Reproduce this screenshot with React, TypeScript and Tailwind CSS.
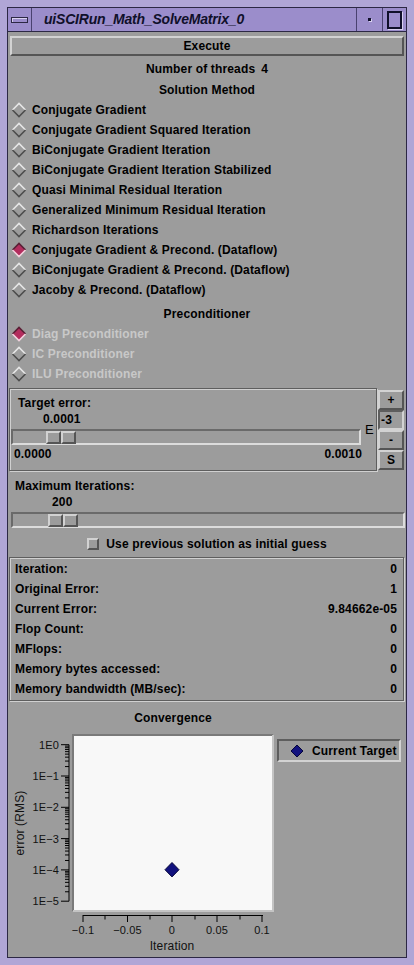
const methods = [
  "Conjugate Gradient",
  "Conjugate Gradient Squared Iteration",
  "BiConjugate Gradient Iteration",
  "BiConjugate Gradient Iteration Stabilized",
  "Quasi Minimal Residual Iteration",
  "Generalized Minimum Residual Iteration",
  "Richardson Iterations",
  "Conjugate Gradient & Precond. (Dataflow)",
  "BiConjugate Gradient & Precond. (Dataflow)",
  "Jacoby & Precond. (Dataflow)",
];

const precs = ["Diag Preconditioner", "IC Preconditioner", "ILU Preconditioner"];

const stats: [string, string][] = [
  ["Iteration:", "0"],
  ["Original Error:", "1"],
  ["Current Error:", "9.84662e-05"],
  ["Flop Count:", "0"],
  ["MFlops:", "0"],
  ["Memory bytes accessed:", "0"],
  ["Memory bandwidth (MB/sec):", "0"],
];

const raised =
  "border-2 border-t-[#d2d2d2] border-l-[#d2d2d2] border-r-[#555555] border-b-[#555555]";
const sunken =
  "border-2 border-t-[#5e5e5e] border-l-[#5e5e5e] border-r-[#d2d2d2] border-b-[#d2d2d2]";
const groove =
  "border border-[#5e5e5e] shadow-[inset_1px_1px_0_#d0d0d0,1px_1px_0_#d0d0d0]";

function Diamond({ on }: { on?: boolean }) {
  return (
    <svg width="16" height="16" viewBox="0 0 16 16" className="shrink-0">
      <polygon points="8,1.5 14.5,8 8,14.5 1.5,8" fill={on ? "#b32d5e" : "#9c9c9c"} />
      <polyline
        points="1.5,8 8,1.5 14.5,8"
        fill="none"
        stroke={on ? "#5a2036" : "#e6e6e6"}
        strokeWidth="1.6"
      />
      <polyline
        points="1.5,8 8,14.5 14.5,8"
        fill="none"
        stroke={on ? "#f2d2de" : "#4e4e4e"}
        strokeWidth="1.6"
      />
    </svg>
  );
}

function Radio({ label, on, dim }: { label: string; on?: boolean; dim?: boolean }) {
  return (
    <div className="flex items-center h-[20px] pl-[3px] gap-[5px]">
      <Diamond on={on} />
      <span className={dim ? "text-[#c8c8c8]" : "text-black"}>{label}</span>
    </div>
  );
}

function Slider({ width, thumb }: { width: number; thumb: number }) {
  return (
    <div
      className="flex items-center h-[16px] border-2 border-t-[#6a6a6a] border-l-[#6a6a6a] border-r-[#dcdcdc] border-b-[#dcdcdc] bg-[#9c9c9c]"
      style={{ width }}
    >
      <div className="flex h-[13px]" style={{ marginLeft: thumb }}>
        <div className={`w-[15px] h-full ${raised} border`} />
        <div className={`w-[15px] h-full ${raised} border`} />
      </div>
    </div>
  );
}

const svgFont = "Liberation Sans, Arial, sans-serif";

function Chart() {
  const majors = [745.7, 777, 808.3, 839.6, 870.9, 902.2];
  const labels = ["1E0", "1E−1", "1E−2", "1E−3", "1E−4", "1E−5"];
  const minors: number[] = [];
  for (let d = 1; d < majors.length; d++) {
    const low = majors[d];
    for (let m = 2; m <= 9; m++) minors.push(low - Math.log10(m) * 31.3);
  }
  const xs = [82, 126.5, 171, 216, 261];
  const xl = ["−0.1", "−0.05", "0", "0.05", "0.1"];
  return (
    <svg width="268" height="223" viewBox="7 734 268 223" className="block font-normal">
      <rect x="72" y="736" width="200" height="176" fill="#f8f8f8" />
      <polyline points="72,912 72,736 272,736" fill="none" stroke="#7a7a7a" strokeWidth="2" />
      <polyline points="272,736 272,912 72,912" fill="none" stroke="#c4c4c4" strokeWidth="2" />
      <line x1="68" y1={majors[0]} x2="68" y2={majors[5]} stroke="#000" strokeWidth="1" />
      {majors.map((y, i) => (
        <g key={i}>
          <line x1="60" y1={y} x2="68" y2={y} stroke="#000" />
          <text x="58" y={y + 4} textAnchor="end" fontSize="11" fontWeight="normal" fontFamily={svgFont} fill="#111">
            {labels[i]}
          </text>
        </g>
      ))}
      {minors.map((y, i) => (
        <line key={i} x1="64" y1={y} x2="68" y2={y} stroke="#000" />
      ))}
      <text
        x="0"
        y="0"
        transform="translate(23 824) rotate(-90)"
        textAnchor="middle"
        fontSize="12"
        fontWeight="normal"
        fontFamily={svgFont}
        fill="#111"
      >
        error (RMS)
      </text>
      <line x1="82" y1="916.5" x2="262" y2="916.5" stroke="#000" />
      {xs.map((x, i) => (
        <g key={i}>
          <line x1={x} y1="916" x2={x} y2="923" stroke="#000" />
          <text x={x} y="935" textAnchor="middle" fontSize="11" fontWeight="normal" fontFamily={svgFont} fill="#111">
            {xl[i]}
          </text>
        </g>
      ))}
      {[104, 149, 194, 239].map((x) => (
        <line key={x} x1={x} y1="916" x2={x} y2="920.5" stroke="#000" />
      ))}
      <text x="171" y="951" textAnchor="middle" fontSize="12" fontWeight="normal" fontFamily={svgFont} fill="#111">
        Iteration
      </text>
      <polygon points="171,863.5 178,870.7 171,877.9 164,870.7" fill="#12127e" stroke="#05053a" strokeWidth="1" />
    </svg>
  );
}

export default function App() {
  return (
    <div className="w-[414px] h-[965px] bg-[#b0a6d6] p-[7px] font-['Liberation_Sans',Arial,sans-serif] text-[12px] tracking-[0.15px] font-bold text-black">
      <div className="flex flex-col h-full border border-[#2c2844] bg-[#9c9c9c]">
        {/* title bar */}
        <div className="flex h-[24px] bg-[#9b8dcb] border-b border-[#2c2844] shrink-0">
          <div className="w-[24px] flex items-center justify-center border-r border-[#4a4270]">
            <div className="w-[17px] h-[6px] border border-[#2c2844] bg-[#9b8dcb] shadow-[inset_1px_1px_0_#d8d0f0]" />
          </div>
          <div className="flex-1 pl-[12px] flex items-center italic text-[14px] text-[#10102a] tracking-[-0.2px]">
            uiSCIRun_Math_SolveMatrix_0
          </div>
          <div className="w-[26px] flex items-center justify-center border-l border-[#4a4270]">
            <div className="w-[3px] h-[3px] bg-[#10102a] shadow-[1px_1px_0_#d8d0f0]" />
          </div>
          <div className="w-[24px] flex items-center justify-center border-l border-[#4a4270]">
            <div className="w-[15px] h-[18px] border-2 border-[#10102a] shadow-[1px_1px_0_#d8d0f0]" />
          </div>
        </div>

        {/* content */}
        <div className="flex flex-col flex-1 pt-[4px]">
          <div className={`mx-[2px] h-[20px] flex items-center justify-center ${raised}`}>Execute</div>
          <div className="mt-[3px] h-[20px] flex items-center justify-center gap-[6px]">
            <span>Number of threads</span>
            <span>4</span>
          </div>
          <div className="h-[21px] flex items-center justify-center">Solution Method</div>
          {methods.map((m, i) => (
            <Radio key={m} label={m} on={i === 7} />
          ))}
          <div className="h-[24px] pt-[4px] leading-[20px] text-center">Preconditioner</div>
          {precs.map((p, i) => (
            <Radio key={p} label={p} on={i === 0} dim />
          ))}

          {/* target error */}
          <div className="flex mt-[4px] h-[84px]">
            <div className={`ml-[1px] w-[368px] h-[83px] flex ${groove}`}>
              <div className="w-[352px] flex flex-col pl-[1px]">
                <div className="mt-[6px] h-[16px] flex items-center pl-[7px]">Target error:</div>
                <div className="h-[16px] flex items-center pl-[32px]">0.0001</div>
                <div className="mt-[2px]">
                  <Slider width={350} thumb={33} />
                </div>
                <div className="h-[16px] mt-[1px] flex items-center justify-between pl-[3px]">
                  <span>0.0000</span>
                  <span>0.0010</span>
                </div>
              </div>
              <div className="flex-1 flex items-center pl-[3px] text-[13px] font-normal">E</div>
            </div>
            <div className="ml-[1px] mt-[2px] w-[26px] flex flex-col">
              <div className={`h-[20px] flex items-center justify-center ${raised}`}>+</div>
              <div className={`h-[20px] flex items-center pl-[1px] ${sunken}`}>-3</div>
              <div className={`h-[20px] flex items-center justify-center ${raised}`}>-</div>
              <div className={`h-[20px] flex items-center justify-center ${raised}`}>S</div>
            </div>
          </div>

          {/* max iterations */}
          <div className="mt-[6px] h-[16px] flex items-center pl-[7px]">Maximum Iterations:</div>
          <div className="h-[16px] flex items-center pl-[44px]">200</div>
          <div className="mt-[2px] ml-[3px]">
            <Slider width={394} thumb={35} />
          </div>
          <div className="mt-[6px] h-[20px] flex items-center justify-center gap-[7px]">
            <div className={`w-[12px] h-[12px] ${raised} border`} />
            <span>Use previous solution as initial guess</span>
          </div>

          {/* stats */}
          <div className={`mt-[3px] ml-[1px] mr-[2px] h-[144px] pt-[1px] ${groove}`}>
            {stats.map(([k, v]) => (
              <div key={k} className="h-[20px] flex items-center justify-between pl-[5px] pr-[6px]">
                <span>{k}</span>
                <span>{v}</span>
              </div>
            ))}
          </div>

          {/* convergence */}
          <div className="flex mt-[2px]">
            <div className="w-[268px] flex flex-col">
              <div className="h-[30px] pl-[62px] flex items-center justify-center">Convergence</div>
              <Chart />
            </div>
            <div className="mt-[36px] ml-[1px]">
              <div className={`w-[124px] h-[23px] flex items-center pl-[11px] gap-[8px] ${sunken}`}>
                <svg width="14" height="14" viewBox="0 0 14 14">
                  <polygon points="7,1 13,7 7,13 1,7" fill="#12127e" stroke="#05053a" strokeWidth="1" />
                </svg>
                <span>Current Target</span>
              </div>
            </div>
          </div>
        </div>
      </div>
    </div>
  );
}
